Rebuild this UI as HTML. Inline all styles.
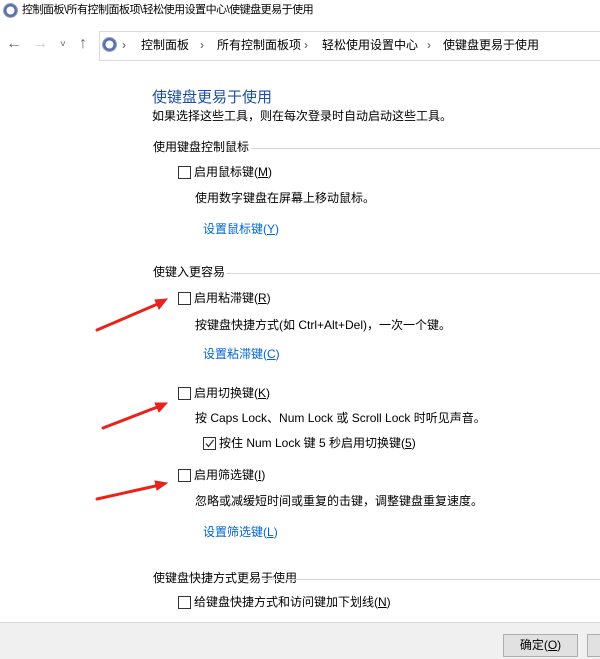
<!DOCTYPE html>
<html><head><meta charset="utf-8"><style>
body{margin:0;width:600px;height:659px;background:#fff;position:relative;overflow:hidden;font-family:"Liberation Sans","Noto Sans CJK SC",sans-serif;font-size:12px;color:#000}
.a{position:absolute;white-space:nowrap;line-height:14px}
.cb{position:absolute;width:11px;height:11px;border:1px solid #333;background:#fff}
.ln{position:absolute;height:1px;background:#d5d5d5;right:0}
.lk{color:#0066cc}
.sep{color:#555}
u{text-decoration:underline}
</style></head><body>
<svg class="a" style="left:3px;top:3px" width="15" height="15"><circle cx="7.5" cy="7.5" r="7" fill="#5a6fb8" stroke="#9aa" /><circle cx="7.5" cy="7.5" r="4" fill="#fff"/></svg>
<div class="a" style="left:22px;top:3px;font-size:11px;letter-spacing:-0.5px">控制面板\所有控制面板项\轻松使用设置中心\使键盘更易于使用</div>
<div class="a" style="left:6px;top:37px;font-size:16px;color:#666">←</div>
<div class="a" style="left:32px;top:37px;font-size:16px;color:#ccc">→</div>
<div class="a" style="left:60px;top:38px;font-size:10px;color:#666">˅</div>
<div class="a" style="left:79px;top:37px;font-size:16px;color:#666">↑</div>
<div style="position:absolute;left:99px;top:31px;right:-2px;height:28px;border:1px solid #d9d9d9"></div>
<svg class="a" style="left:102px;top:37px" width="15" height="15"><circle cx="7.5" cy="7.5" r="7" fill="#5a6fb8" stroke="#9aa"/><circle cx="7.5" cy="7.5" r="4" fill="#fff"/></svg>
<div class="a sep" style="left:122px;top:38px">›</div>
<div class="a" style="left:141px;top:38px">控制面板</div>
<div class="a sep" style="left:200px;top:38px">›</div>
<div class="a" style="left:217px;top:38px">所有控制面板项</div>
<div class="a sep" style="left:304px;top:38px">›</div>
<div class="a" style="left:322px;top:38px">轻松使用设置中心</div>
<div class="a sep" style="left:427px;top:38px">›</div>
<div class="a" style="left:443px;top:38px">使键盘更易于使用</div>

<div class="a" style="left:152px;top:89px;font-size:15px;line-height:18px;color:#1c4fa8">使键盘更易于使用</div>
<div class="a" style="left:152px;top:109px">如果选择这些工具，则在每次登录时自动启动这些工具。</div>

<div class="a" style="left:153px;top:140px">使用键盘控制鼠标</div><div class="ln" style="left:251px;top:148px"></div>
<div class="cb" style="left:178px;top:166px"></div><div class="a" style="left:194px;top:165px">启用鼠标键(<u>M</u>)</div>
<div class="a" style="left:195px;top:191px">使用数字键盘在屏幕上移动鼠标。</div>
<div class="a lk" style="left:203px;top:222px">设置鼠标键(<u>Y</u>)</div>

<div class="a" style="left:153px;top:265px">使键入更容易</div><div class="ln" style="left:226px;top:273px"></div>
<div class="cb" style="left:178px;top:292px"></div><div class="a" style="left:194px;top:291px">启用粘滞键(<u>R</u>)</div>
<div class="a" style="left:195px;top:318px">按键盘快捷方式(如 Ctrl+Alt+Del)，一次一个键。</div>
<div class="a lk" style="left:203px;top:347px">设置粘滞键(<u>C</u>)</div>

<div class="cb" style="left:178px;top:387px"></div><div class="a" style="left:194px;top:386px">启用切换键(<u>K</u>)</div>
<div class="a" style="left:195px;top:411px">按 Caps Lock、Num Lock 或 Scroll Lock 时听见声音。</div>
<div class="cb" style="left:203px;top:437px"></div>
<svg class="a" style="left:204px;top:438px" width="11" height="11"><path d="M2 5.5L4.5 8.5L9.5 2" stroke="#333" stroke-width="1.3" fill="none"/></svg>
<div class="a" style="left:219px;top:436px">按住 Num Lock 键 5 秒启用切换键(<u>5</u>)</div>

<div class="cb" style="left:178px;top:469px"></div><div class="a" style="left:194px;top:468px">启用筛选键(<u>I</u>)</div>
<div class="a" style="left:195px;top:494px">忽略或减缓短时间或重复的击键，调整键盘重复速度。</div>
<div class="a lk" style="left:203px;top:525px">设置筛选键(<u>L</u>)</div>

<div class="a" style="left:153px;top:571px">使键盘快捷方式更易于使用</div><div class="ln" style="left:262px;top:579px"></div>
<div class="cb" style="left:178px;top:596px"></div><div class="a" style="left:194px;top:595px">给键盘快捷方式和访问键加下划线(<u>N</u>)</div>

<svg style="position:absolute;left:0;top:0" width="600" height="659">
<g stroke="#e8231c" stroke-width="3" stroke-linecap="round" fill="#e8231c">
<line x1="97" y1="330" x2="160" y2="303"/><polygon points="167,299 155,300 159,309" stroke-width="1"/>
<line x1="103" y1="428" x2="160" y2="406"/><polygon points="167,403 155,403 159,412" stroke-width="1"/>
<line x1="97" y1="499" x2="160" y2="485"/><polygon points="167,483 155,481 157,490" stroke-width="1"/>
</g></svg>

<div style="position:absolute;left:0;top:622px;width:600px;height:1px;background:#d9d9d9"></div>
<div style="position:absolute;left:0;top:623px;width:600px;height:36px;background:#f0f0f0"></div>
<div style="position:absolute;left:503px;top:634px;width:73px;height:21px;border:1px solid #adadad;background:#e1e1e1;text-align:center;line-height:21px">确定(<u>O</u>)</div>
<div style="position:absolute;left:587px;top:634px;width:40px;height:21px;border:1px solid #adadad;background:#e1e1e1"></div>
</body></html>
